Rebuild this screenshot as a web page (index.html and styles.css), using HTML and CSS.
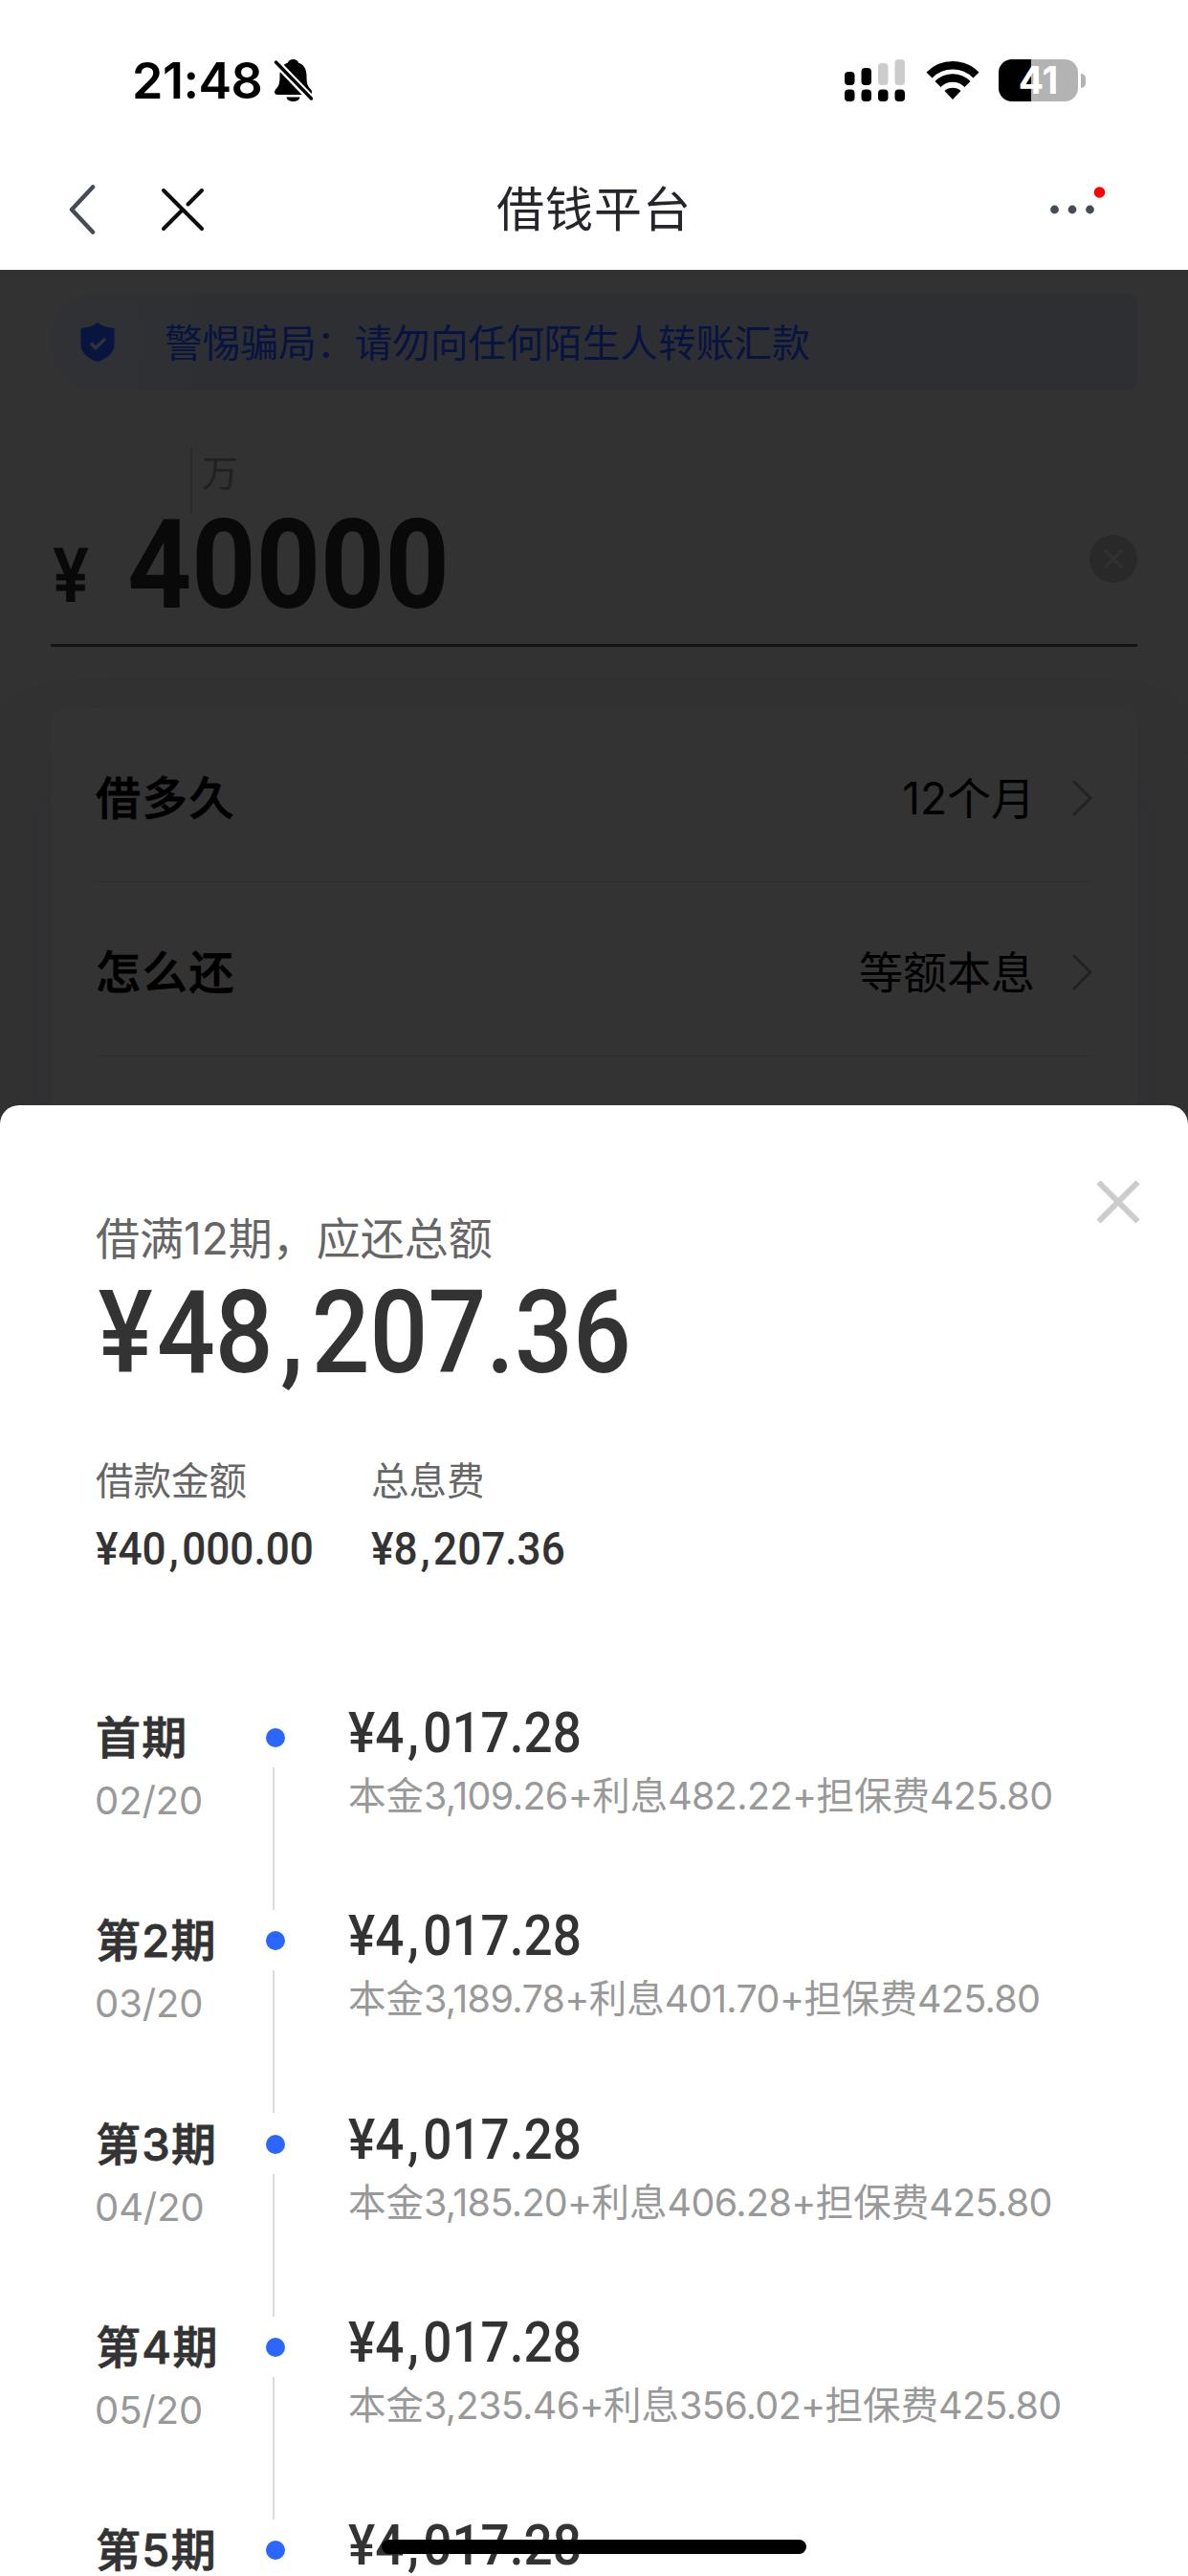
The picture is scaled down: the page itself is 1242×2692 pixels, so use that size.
FILE: index.html
```html
<!DOCTYPE html>
<html lang="zh-CN">
<head>
<meta charset="utf-8">
<title>借钱平台</title>
<link rel="stylesheet" href="styles.css">
</head>
<body>
<div class="screen">
  <header class="header">
    <div class="status">
      <span class="clock">21:48</span>
      <svg class="bell" width="42" height="46" viewBox="0 0 42 46">
        <path d="M20.500 1c3 0 5 1.500 5.500 3.500 6 2 8.500 7.500 8.500 13.500 0 8 1 11 4.500 14.500 2 2.500 1 5.500-1.500 5.500H4c-3 0-4-3.500-1.500-6C6 28.500 6.500 25 6.500 18c0-6 2.500-11.500 8.500-13.500C15.500 2.500 17.500 1 20.500 1z"/>
        <path d="M13.500 40.500h14c-.5 3-3.500 4.500-7 4.500s-6.500-1.500-7-4.500z"/>
        <path d="M3 4.500 40 43" stroke="#fff" stroke-width="8"/>
        <path d="M2.500 4 39.500 42" stroke="#000" stroke-width="3.400" stroke-linecap="round"/>
      </svg>
      <svg class="signal" width="64" height="46" viewBox="0 0 64 46">
        <rect x="0" y="14" width="10.500" height="14" rx="4"/><rect x="17.500" y="10" width="10.500" height="18" rx="4"/>
        <rect x="35" y="5" width="10.500" height="23" rx="4" fill="#ccc"/><rect x="52.500" y="1" width="10.500" height="27" rx="4" fill="#ccc"/>
        <rect x="0" y="32.500" width="10.500" height="12.500" rx="4"/><rect x="17.500" y="32.500" width="10.500" height="12.500" rx="4"/>
        <rect x="35" y="32.500" width="10.500" height="12.500" rx="4"/><rect x="52.500" y="32.500" width="10.500" height="12.500" rx="4"/>
      </svg>
      <svg class="wifi" width="56" height="42" viewBox="0 0 56 42">
        <g fill="none" stroke="#000" stroke-width="8.500"><path d="M3.500 15.500C17 1.800 39 1.800 52.500 15.500"/><path d="M12.500 25C21 16.300 35 16.300 43.500 25"/></g>
        <path d="M28 41 19.500 32C24 27.700 32 27.700 36.500 32z"/>
      </svg>
      <div class="battery"><span class="battery-body">41</span><span class="battery-tip"></span></div>
    </div>
    <nav class="nav">
      <svg class="back" width="30" height="56" viewBox="0 0 30 56"><path d="M27 4.500 5 28 27 51.500" fill="none" stroke="#454b57" stroke-width="4.500" stroke-linecap="round" stroke-linejoin="round"/></svg>
      <svg class="exit" width="48" height="48" viewBox="0 0 48 48"><path d="M4 4 44 44M44 4 29.500 18.500M24 24 4 44" fill="none" stroke="#0a0a0a" stroke-width="4" stroke-linecap="round"/></svg>
      <h1 class="title">借钱平台</h1>
      <svg class="more" width="60" height="46" viewBox="0 0 60 46">
        <g fill="#454b57"><circle cx="5.500" cy="25" r="4.400"/><circle cx="24" cy="25" r="4.400"/><circle cx="42.500" cy="25" r="4.400"/></g>
        <circle cx="52.500" cy="7" r="5.800" fill="#f00"/>
      </svg>
    </nav>
  </header>

  <main class="loan">
    <div class="notice">
      <span class="notice-badge"><svg width="36" height="41" viewBox="0 0 36 41"><path d="M18 0c4 3.500 10 5.500 17.500 6v17c0 9-8 15-17.500 18C8.500 38 .5 32 .5 23V6C8 5.500 14 3.500 18 0z" fill="#08153f"/><path d="m11 21.500 5 5L26 17" fill="none" stroke="#303238" stroke-width="3.600"/></svg></span>
      <span class="notice-text">警惕骗局：请勿向任何陌生人转账汇款</span>
    </div>
    <div class="unit">万</div>
    <div class="amount">
      <span class="amount-sign">¥</span>
      <span class="amount-value">40000</span>
      <svg class="clear" width="50" height="50" viewBox="0 0 50 50"><circle cx="25" cy="25" r="25" fill="#292929"/><path d="m15.500 15.500 19 19m0-19-19 19" stroke="#313131" stroke-width="3.500"/></svg>
    </div>
    <section class="options">
      <div class="option"><strong>借多久</strong><span>12个月</span><svg width="22" height="40" viewBox="0 0 22 40"><path d="m2 2 18 18L2 38" fill="none" stroke="#222" stroke-width="3"/></svg></div>
      <div class="option"><strong>怎么还</strong><span>等额本息</span><svg width="22" height="40" viewBox="0 0 22 40"><path d="m2 2 18 18L2 38" fill="none" stroke="#222" stroke-width="3"/></svg></div>
    </section>
  </main>

  <section class="sheet">
    <svg class="sheet-close" width="46" height="46" viewBox="0 0 46 46"><path d="m2.500 2.500 41 41m0-41-41 41" stroke="#ccc" stroke-width="6"/></svg>
    <p class="lead">借满12期，应还总额</p>
    <p class="total num"><span class="sign">¥</span>48<i>,</i>207.36</p>
    <dl class="summary">
      <div><dt>借款金额</dt><dd class="num">¥40<i>,</i>000.00</dd></div>
      <div><dt>总息费</dt><dd class="num">¥8<i>,</i>207.36</dd></div>
    </dl>
    <ol class="plan">
      <li class="term"><div class="when"><b>首期</b><span>02/20</span></div><div class="rail"></div><div class="pay"><b class="num">¥4<i>,</i>017.28</b><span>本金<em>3,109.26+</em>利息<em>482.22+</em>担保费<em>425.80</em></span></div></li>
      <li class="term"><div class="when"><b>第2期</b><span>03/20</span></div><div class="rail"></div><div class="pay"><b class="num">¥4<i>,</i>017.28</b><span>本金<em>3,189.78+</em>利息<em>401.70+</em>担保费<em>425.80</em></span></div></li>
      <li class="term"><div class="when"><b>第3期</b><span>04/20</span></div><div class="rail"></div><div class="pay"><b class="num">¥4<i>,</i>017.28</b><span>本金<em>3,185.20+</em>利息<em>406.28+</em>担保费<em>425.80</em></span></div></li>
      <li class="term"><div class="when"><b>第4期</b><span>05/20</span></div><div class="rail"></div><div class="pay"><b class="num">¥4<i>,</i>017.28</b><span>本金<em>3,235.46+</em>利息<em>356.02+</em>担保费<em>425.80</em></span></div></li>
      <li class="term"><div class="when"><b>第5期</b></div><div class="rail"></div><div class="pay"><b class="num">¥4<i>,</i>017.28</b></div></li>
    </ol>
  </section>
  <div class="home-bar"></div>
</div>
</body>
</html>
```
FILE: styles.css
```css
* { box-sizing: border-box; }
body, h1, p, dl, dd, ol { margin: 0; padding: 0; }
body { background: #fff; font-family: Inter, "Noto Sans CJK SC", sans-serif; color: #333; }
svg { display: block; flex: none; }

.screen { position: relative; width: 1242px; height: 2692px; overflow: hidden; }

/* Status bar and navigation */
.header { height: 282px; }
.status { height: 168px; padding: 0 107px 0 138px; display: flex; align-items: center; }
.clock { width: 148px; padding-top: 2px; font-size: 52px; font-weight: 600; line-height: 60px; letter-spacing: -.5px; color: #000; white-space: nowrap; }
.signal { margin-left: auto; }
.wifi { margin-left: 21px; }
.battery { display: flex; align-items: center; gap: 3px; margin-left: 20px; }
.battery-body { width: 83px; height: 44px; border-radius: 14px; background: linear-gradient(90deg, #000 34px, #b3b3b3 34px); color: #fff; font-size: 39px; font-weight: 700; line-height: 43px; text-align: center; }
.battery-tip { width: 5px; height: 15px; border-radius: 0 5px 5px 0; background: #b3b3b3; }
.nav { height: 102px; padding: 0 85px 0 70px; display: grid; grid-template-columns: 97px 352px 1fr 60px; align-items: center; }
.title { font-size: 50px; font-weight: 400; line-height: 60px; letter-spacing: 1px; color: #24262b; }
.more { margin-top: -4px; }

/* Loan form behind the mask */
.loan { height: 893px; padding: 25px 53px 0; background: #323232; overflow: hidden; }
.notice { height: 101px; display: flex; align-items: center; gap: 23px; border-radius: 50px 10px 10px 50px; background: linear-gradient(90deg, #313234, #2e2f33 180px); color: #071340; font-size: 39.7px; white-space: nowrap; }
.notice-badge { width: 96px; height: 101px; padding-left: 2px; border-radius: 50px; display: grid; place-items: center; background: #303134; }
.notice-text { padding-bottom: 5px; }
.unit { width: 60px; height: 67px; margin: 60px 0 0 146px; padding-left: 10px; border-left: 2px solid #2a2a2a; font-size: 38px; line-height: 52px; color: #212121; }
.amount { height: 141px; padding-bottom: 26px; display: flex; align-items: center; border-bottom: 3px solid #141414; color: #090909; font-family: Roboto, sans-serif; font-weight: 700; }
.amount-sign { width: 80px; padding: 22px 0 0 3px; font-size: 78px; font-weight: 500; line-height: 80px; transform: scaleX(.88); transform-origin: left; -webkit-text-stroke: 1px #090909; }
.amount-value { font-size: 129px; line-height: 112px; transform: scaleX(.91); transform-origin: left; }
.clear { margin: 0 0 14px auto; }
.options { height: 500px; margin-top: 64px; padding: 0 47px 0 47px; border-radius: 16px; background: #333; box-shadow: 0 40px 60px #303035; color: #000; }
.option { height: 182px; padding-top: 6px; display: flex; align-items: center; border-bottom: 1px solid #2e2e2e; font-size: 46px; line-height: 60px; }
.option strong { margin-right: auto; font-size: 47px; font-weight: 500; letter-spacing: 1.8px; -webkit-text-stroke: .8px #000; }
.option svg { margin-left: 38px; }

/* Repayment sheet */
.sheet { position: relative; height: 1537px; margin-top: -20px; padding: 111px 53px 0 100px; border-radius: 20px 20px 0 0; background: #fff; }
.sheet-close { position: absolute; top: 78px; right: 50px; }
.lead { font-size: 46px; line-height: 56px; color: #666; }
.num { font-family: Roboto, sans-serif; font-weight: 500; color: #333; transform: scaleX(.9); transform-origin: left; white-space: nowrap; }
.num i { font-style: normal; margin: 0 .08em 0 .07em; }
.total { margin-top: 28px; padding-left: 3px; font-size: 121px; line-height: 86px; transform: scaleX(.885); }
.sign { margin-right: 5px; }
.summary { margin-top: 88px; display: grid; grid-template-columns: 288px 288px; font-size: 39.5px; line-height: 48px; color: #666; }
.summary dd { margin-top: 23px; font-size: 48px; transform: scaleX(.92); }
.plan { margin-top: 143px; list-style: none; }
.term { height: 212.3px; display: grid; grid-template-columns: 178px 86px 1fr; }
.when, .pay { display: flex; flex-direction: column; white-space: nowrap; }
.when { padding-top: 2px; }
.when b { font-size: 47px; font-weight: 500; line-height: 56px; letter-spacing: 1.3px; -webkit-text-stroke: .8px #333; }
.when span { margin: 18px 0 0 -1px; font-size: 40px; line-height: 40px; letter-spacing: -.1px; color: #999; }
.pay b { font-size: 59px; line-height: 50px; }
.pay span { margin-top: 19px; font-size: 39.5px; line-height: 44px; color: #999; }
.pay em { font-style: normal; letter-spacing: -.65px; }
.rail { display: flex; flex-direction: column; align-items: flex-start; padding-top: 20px; }
.rail::before { content: ""; width: 20px; height: 20px; border-radius: 50%; background: #2b66ff; }
.rail::after { content: ""; width: 2px; height: 149px; margin: 21px 0 0 7px; background: #dcdcdc; }

.home-bar { position: absolute; left: 399px; top: 2654px; width: 444px; height: 15px; border-radius: 8px; background: #000; }
```
